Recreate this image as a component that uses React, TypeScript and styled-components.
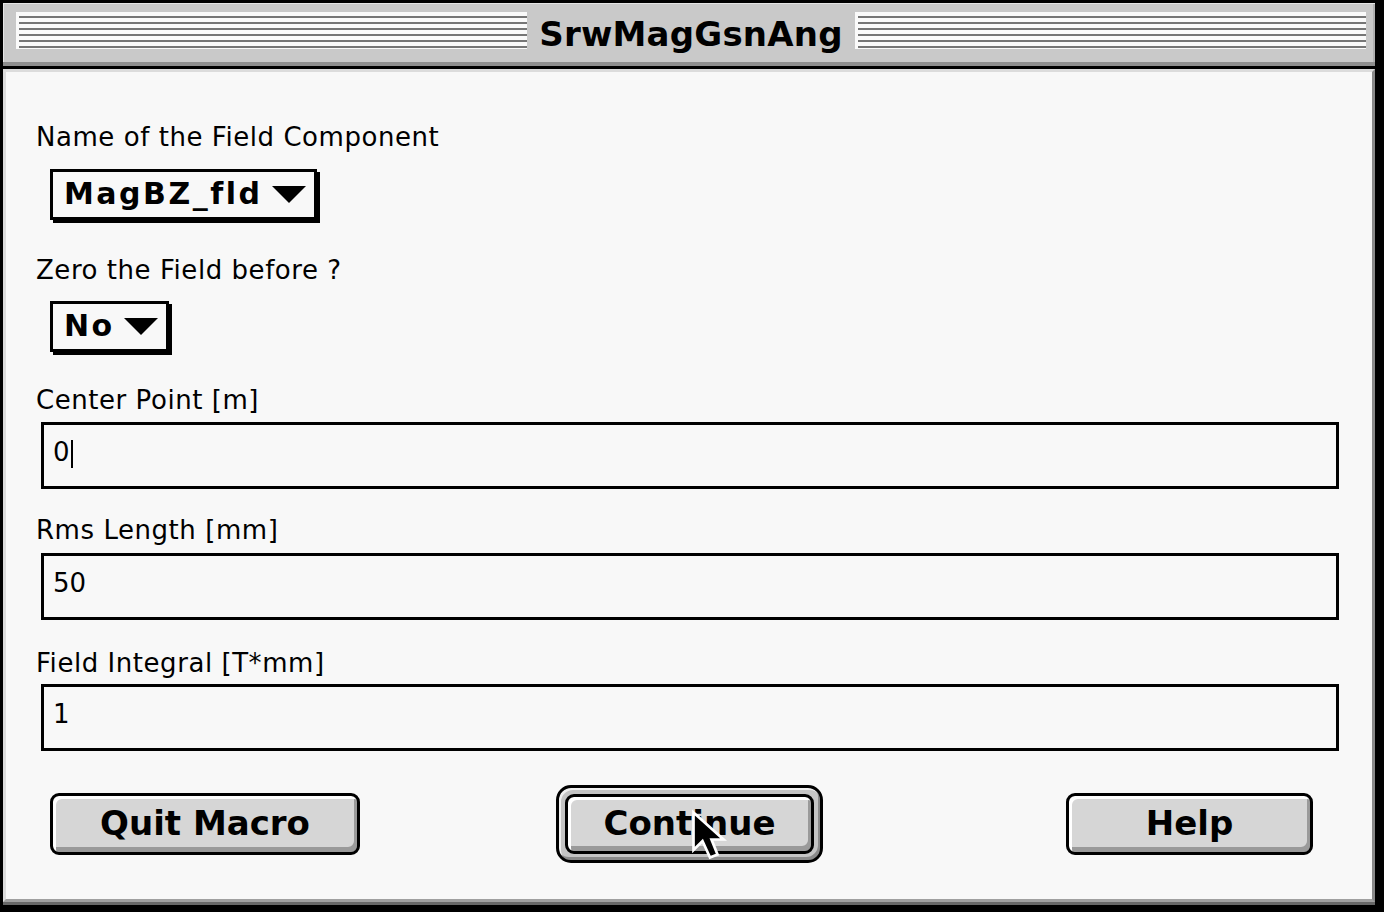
import React from "react";
import styled, { createGlobalStyle } from "styled-components";

const Global = createGlobalStyle`
  html, body { margin: 0; padding: 0; background: #000; }
  body {
    width: 1384px;
    height: 912px;
    overflow: hidden;
    font-family: "DejaVu Sans", Verdana, sans-serif;
    color: #000;
  }
`;

const Window = styled.div`
  box-sizing: border-box;
  width: 1384px;
  height: 912px;
  background: #000;
  border-style: solid;
  border-color: #000;
  border-width: 3px 9px 10px 3px;
  display: flex;
  flex-direction: column;
`;

const TitleBar = styled.div`
  flex: none;
  height: 59px;
  background: #c9c9c9;
  box-shadow: inset 1px 1px 0 #e4e4e4, inset -2px 0 0 #b0b0b0;
  border-bottom: 4px solid #8e8e8e;
  margin-bottom: 3px;
  display: flex;
  align-items: flex-start;
  padding: 0 9px 0 13px;
`;

const Stripes = styled.div`
  flex: 1;
  height: 37px;
  margin-top: 9px;
  background:
    linear-gradient(to right, #fafafa 3px, transparent 3px),
    repeating-linear-gradient(
      to bottom,
      #fafafa 0px,
      #fafafa 4px,
      #767676 4px,
      #767676 6px
    );
`;

const Title = styled.div`
  align-self: center;
  padding: 3px 12px 0;
  font-family: "DejaVu Sans", Verdana, sans-serif;
  font-weight: 700;
  font-size: 34px;
  line-height: 40px;
  letter-spacing: 0.2px;
  white-space: nowrap;
`;

const Content = styled.div`
  flex: 1;
  background: #f8f8f8;
  border-style: solid;
  border-width: 3px;
  border-color: #dcdcdc #8a8a8a #a0a0a0 #dcdcdc;
  box-shadow: 0 3px 0 #686868;
  padding: 51px 33px 0 30px;
  display: flex;
  flex-direction: column;
  align-items: flex-start;
`;

const Label = styled.div<{ $top: number }>`
  margin-top: ${(p) => p.$top}px;
  font-size: 26px;
  line-height: 28px;
  letter-spacing: 0.55px;
  white-space: nowrap;
`;

const Popup = styled.div<{ $top: number }>`
  box-sizing: border-box;
  margin-top: ${(p) => p.$top}px;
  margin-left: 14px;
  height: 51px;
  display: inline-flex;
  align-items: center;
  gap: 9px;
  padding: 0 8px 2px 11px;
  border: 3px solid #000;
  box-shadow: 3px 3px 0 #000;
  background: #f8f8f8;
  font-weight: 700;
  font-size: 30px;
  line-height: 34px;
  letter-spacing: 2.5px;
  white-space: nowrap;
`;

const Arrow = styled.svg`
  flex: none;
  display: block;
  margin-top: 2px;
`;

const TextField = styled.div<{ $top: number }>`
  box-sizing: border-box;
  align-self: stretch;
  margin-top: ${(p) => p.$top}px;
  margin-left: 5px;
  height: 67px;
  border: 3px solid #000;
  padding: 13px 9px 0;
  font-size: 26px;
  line-height: 28px;
  display: flex;
  align-items: flex-start;
`;

const Caret = styled.span`
  display: inline-block;
  width: 2px;
  height: 28px;
  margin-top: 2px;
  margin-left: 1px;
  background: #000;
`;

const ButtonRow = styled.div`
  align-self: stretch;
  margin-top: 34px;
  padding: 0 26px 0 14px;
  display: flex;
  align-items: center;
`;

const Button = styled.div<{ $w: number; $h?: number }>`
  box-sizing: border-box;
  width: ${(p) => p.$w}px;
  height: ${(p) => p.$h ?? 62}px;
  border: 3px solid #000;
  border-radius: 9px;
  background: #d6d6d6;
  box-shadow: inset 3px 3px 0 #ffffff, inset -3px -5px 0 #9a9a9a;
  display: flex;
  align-items: center;
  justify-content: center;
  font-weight: 700;
  font-size: 34px;
  line-height: 40px;
  padding-bottom: 2px;
  white-space: nowrap;
`;

const DefaultRing = styled.div`
  position: relative;
  box-sizing: border-box;
  margin-left: 196px;
  width: 267px;
  height: 78px;
  border: 3px solid #000;
  border-radius: 15px;
  padding: 6px;
  background: #c4c4c4;
  box-shadow: inset 2px 2px 0 #f0f0f0, inset -2px -3px 0 #8a8a8a;
`;

const Cursor = styled.svg`
  position: absolute;
  left: 130px;
  top: 20px;
  pointer-events: none;
`;

const HelpSlot = styled.div`
  margin-left: auto;
`;

export default function App() {
  return (
    <>
      <Global />
      <Window>
        <TitleBar>
          <Stripes />
          <Title>SrwMagGsnAng</Title>
          <Stripes />
        </TitleBar>
        <Content>
          <Label $top={0}>Name of the Field Component</Label>
          <Popup $top={18}>
            <span>MagBZ_fld</span>
            <Arrow width="34" height="17" viewBox="0 0 34 17">
              <polygon points="0,0 34,0 17,17" fill="#000" />
            </Arrow>
          </Popup>
          <Label $top={36}>Zero the Field before ?</Label>
          <Popup $top={17}>
            <span>No</span>
            <Arrow width="34" height="17" viewBox="0 0 34 17">
              <polygon points="0,0 34,0 17,17" fill="#000" />
            </Arrow>
          </Popup>
          <Label $top={34}>Center Point [m]</Label>
          <TextField $top={8}>
            <span>0</span>
            <Caret />
          </TextField>
          <Label $top={27}>Rms Length [mm]</Label>
          <TextField $top={9}>
            <span>50</span>
          </TextField>
          <Label $top={29}>Field Integral [T*mm]</Label>
          <TextField $top={7}>
            <span>1</span>
          </TextField>
          <ButtonRow>
            <Button $w={310}>Quit Macro</Button>
            <DefaultRing>
              <Button $w={249} $h={60}>Continue</Button>
              <Cursor width="39" height="54" viewBox="-1 -1 13 18">
                <path
                  d="M0.5 0.5 V13 L3.5 10 L6 15.5 L8.5 14.5 L6.5 9.5 H10.5 Z"
                  fill="#000"
                  stroke="#fff"
                  strokeWidth="0.9"
                  strokeLinejoin="miter"
                />
              </Cursor>
            </DefaultRing>
            <HelpSlot>
              <Button $w={247}>Help</Button>
            </HelpSlot>
          </ButtonRow>
        </Content>
      </Window>
    </>
  );
}
